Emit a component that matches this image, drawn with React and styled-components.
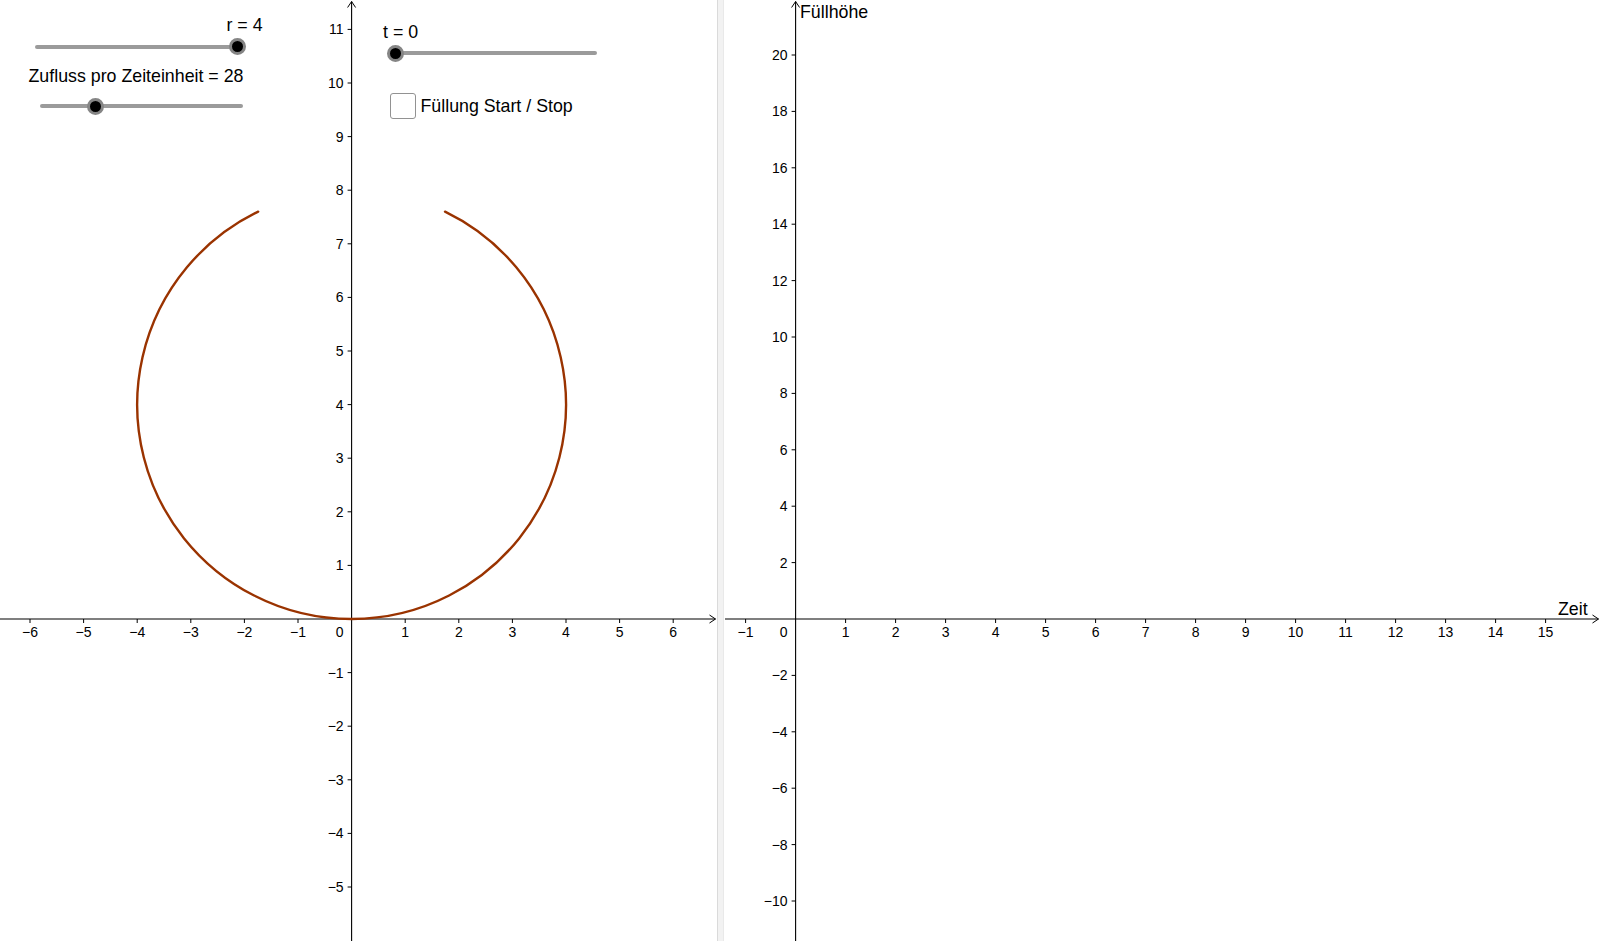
import React from "react";
import styled, { createGlobalStyle } from "styled-components";

const FONT = `"Liberation Sans", Arial, sans-serif`;

const GlobalStyle = createGlobalStyle`
  html, body {
    margin: 0;
    padding: 0;
    background: #ffffff;
    overflow: hidden;
  }
  #root {
    width: 1600px;
    height: 941px;
  }
`;

const Applet = styled.div`
  display: flex;
  width: 1600px;
  height: 941px;
  background: #ffffff;
  font-family: ${FONT};
  color: #000;
`;

const GraphView = styled.div`
  position: relative;
  flex: ${(p) => (p.$grow ? "1 1 auto" : "none")};
  width: ${(p) => (p.$width ? `${p.$width}px` : "auto")};
  height: 100%;
  overflow: hidden;
`;

const Splitter = styled.div`
  flex: none;
  width: 7px;
  height: 100%;
  box-sizing: border-box;
  background: #f2f2f2;
  border-left: 1px solid #dadada;
  border-right: 1px solid #e9e9e9;
`;

const Canvas = styled.svg`
  display: block;
  width: 100%;
  height: 100%;
  font-family: ${FONT};
`;

/* Widgets sit on the free graphics canvas: their place there is the content */
const CanvasWidget = styled.div`
  position: absolute;
  left: ${(p) => p.$x}px;
  top: ${(p) => p.$y}px;
  display: flex;
  flex-direction: ${(p) => (p.$row ? "row" : "column")};
  align-items: ${(p) => (p.$row ? "center" : "flex-start")};
  gap: ${(p) => p.$gap}px;
`;

const Caption = styled.div`
  padding-left: ${(p) => p.$indent || 0}px;
  font-size: 17.8px;
  line-height: 18px;
  white-space: nowrap;
  color: #000;
`;

const TrackRow = styled.div`
  position: relative;
  display: flex;
  align-items: center;
  margin-left: ${(p) => p.$offset || 0}px;
  width: ${(p) => p.$w}px;
  height: 17px;
`;

const Track = styled.div`
  flex: 1;
  height: 4px;
  border-radius: 2px;
  background: #9b9b9b;
`;

const Thumb = styled.div`
  position: absolute;
  top: 0;
  width: 17px;
  height: 17px;
  margin-left: -8.5px;
  box-sizing: border-box;
  border-radius: 50%;
  background: #000;
  border: 3px solid #858585;
`;

const CheckBox = styled.div`
  flex: none;
  width: 26px;
  height: 26px;
  box-sizing: border-box;
  border: 1.5px solid #929292;
  border-radius: 3px;
  background: #fff;
`;

const AXIS_FONT = 14;
const MINUS = "\u2212";
const fmt = (v) => (v < 0 ? MINUS + Math.abs(v) : String(v));

function range(a, b, step = 1) {
  const out = [];
  for (let v = a; v <= b; v += step) if (v !== 0) out.push(v);
  return out;
}

function Axes({ w, h, ox, oy, ux, uy, xs, ys, xTitle, yTitle, xTitlePos, yTitlePos, xStart = 0 }) {
  const xEnd = w - 1.5;
  return (
    <g>
      <line x1={xStart} y1={oy} x2={xEnd} y2={oy} stroke="#000" strokeWidth="1.1" />
      <polyline
        points={`${xEnd - 6},${oy - 4} ${xEnd},${oy} ${xEnd - 6},${oy + 4}`}
        fill="none"
        stroke="#000"
        strokeWidth="1"
      />
      <line x1={ox} y1={1.5} x2={ox} y2={h} stroke="#000" strokeWidth="1.1" />
      <polyline
        points={`${ox - 4},7.5 ${ox},1.5 ${ox + 4},7.5`}
        fill="none"
        stroke="#000"
        strokeWidth="1"
      />
      {xs.map((v) => {
        const x = ox + v * ux;
        return (
          <g key={`x${v}`}>
            <line x1={x} y1={oy} x2={x} y2={oy + 4} stroke="#000" strokeWidth="1" />
            <text x={x} y={oy + 18} fontSize={AXIS_FONT} textAnchor="middle" fill="#000">
              {fmt(v)}
            </text>
          </g>
        );
      })}
      <text x={ox - 12} y={oy + 18} fontSize={AXIS_FONT} textAnchor="middle" fill="#000">
        0
      </text>
      {ys.map((v) => {
        const y = oy - v * uy;
        return (
          <g key={`y${v}`}>
            <line x1={ox - 4} y1={y} x2={ox} y2={y} stroke="#000" strokeWidth="1" />
            <text x={ox - 8} y={y + 5} fontSize={AXIS_FONT} textAnchor="end" fill="#000">
              {fmt(v)}
            </text>
          </g>
        );
      })}
      {xTitle && (
        <text x={xTitlePos[0]} y={xTitlePos[1]} fontSize="17.8" fill="#000">
          {xTitle}
        </text>
      )}
      {yTitle && (
        <text x={yTitlePos[0]} y={yTitlePos[1]} fontSize="17.8" fill="#000">
          {yTitle}
        </text>
      )}
    </g>
  );
}

function Slider({ x, y, gap, label, indent, offset, width, at }) {
  return (
    <CanvasWidget $x={x} $y={y} $gap={gap}>
      <Caption $indent={indent}>{label}</Caption>
      <TrackRow $w={width} $offset={offset}>
        <Track />
        <Thumb style={{ left: `${at}px` }} />
      </TrackRow>
    </CanvasWidget>
  );
}

export default function App() {
  const L = { w: 717, h: 941, ox: 351.6, oy: 619, u: 53.6 };
  const cx = L.ox;
  const cy = L.oy - 4 * L.u;
  const R = 4 * L.u;
  const dy = 3.6 * L.u;
  const dx = Math.sqrt(R * R - dy * dy);
  const arc = `M ${cx - dx} ${cy - dy} A ${R} ${R} 0 1 0 ${cx + dx} ${cy - dy}`;

  const Rv = { w: 876, h: 941, ox: 71.6, oy: 619, ux: 50, uy: 28.2 };

  return (
    <>
      <GlobalStyle />
      <Applet>
        <GraphView $width={L.w}>
          <Canvas viewBox={`0 0 ${L.w} ${L.h}`}>
            <Axes
              w={L.w}
              h={L.h}
              ox={L.ox}
              oy={L.oy}
              ux={L.u}
              uy={L.u}
              xs={range(-6, 6)}
              ys={range(-5, 11)}
            />
            <path d={arc} fill="none" stroke="#9a3300" strokeWidth="2.4" strokeLinecap="round" />
          </Canvas>

          <Slider x={35} y={15.5} gap={4.7} label="r = 4" indent={191.5} offset={0} width={207} at={202.7} />
          <Slider x={28.5} y={67} gap={12.5} label="Zufluss pro Zeiteinheit = 28" indent={0} offset={11.5} width={203} at={55} />
          <Slider x={383} y={22.6} gap={4.2} label="t = 0" indent={0} offset={10} width={204} at={2.5} />

          <CanvasWidget $x={390} $y={92.5} $row $gap={4.5}>
            <CheckBox />
            <Caption>Füllung Start / Stop</Caption>
          </CanvasWidget>
        </GraphView>

        <Splitter />

        <GraphView $grow>
          <Canvas viewBox={`0 0 ${Rv.w} ${Rv.h}`}>
            <Axes
              w={Rv.w}
              h={Rv.h}
              ox={Rv.ox}
              oy={Rv.oy}
              ux={Rv.ux}
              uy={Rv.uy}
              xs={range(-1, 15)}
              ys={range(-10, 20, 2)}
              xStart={1}
              xTitle="Zeit"
              xTitlePos={[834, 615]}
              yTitle="Füllhöhe"
              yTitlePos={[76, 18.3]}
            />
          </Canvas>
        </GraphView>
      </Applet>
    </>
  );
}
